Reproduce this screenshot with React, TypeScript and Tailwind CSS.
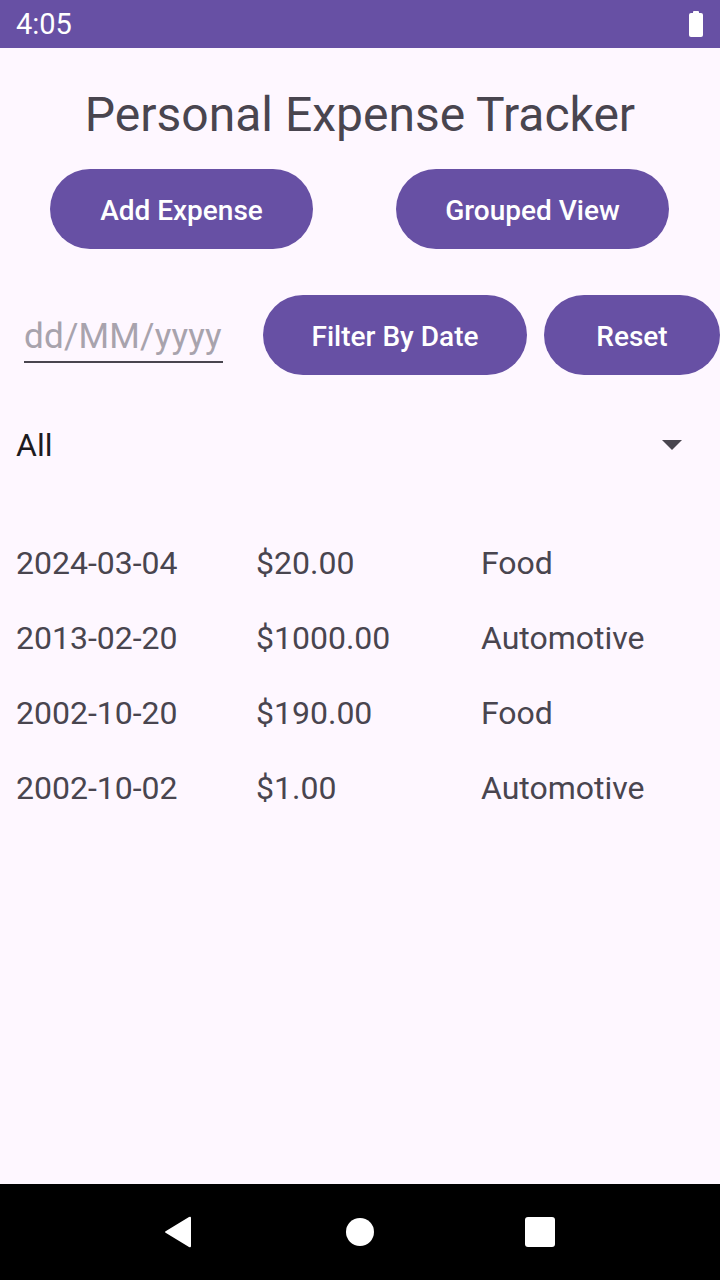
const expenses = [
  { date: "2024-03-04", amount: "$20.00", category: "Food" },
  { date: "2013-02-20", amount: "$1000.00", category: "Automotive" },
  { date: "2002-10-20", amount: "$190.00", category: "Food" },
  { date: "2002-10-02", amount: "$1.00", category: "Automotive" },
];

const PillButton = ({ label, className }: { label: string; className?: string }) => (
  <button
    className={
      "h-[80px] shrink-0 rounded-full bg-[#6750A4] pt-[3px] text-[28px] font-medium text-white " +
      (className ?? "")
    }
  >
    {label}
  </button>
);

const App = () => {
  return (
    <div className="w-[720px] h-[1280px] flex flex-col overflow-hidden bg-[#FEF7FF] font-['Roboto',sans-serif]">
      {/* status bar */}
      <div className="h-[48px] shrink-0 flex items-center justify-between bg-[#6750A4] pl-4 pr-[16px]">
        <span className="text-[29px] leading-none text-white">4:05</span>
        <svg width="16" height="26" viewBox="0 0 16 26">
          <rect x="5" y="0" width="6" height="3" rx="1" fill="#fff" />
          <rect x="1" y="2" width="14" height="24" rx="2" fill="#fff" />
        </svg>
      </div>

      <div className="flex-1 flex flex-col">
        <h1 className="mt-[39px] h-[56px] text-center text-[48px] leading-[56px] font-normal text-[#49454F]">
          Personal Expense Tracker
        </h1>

        <div className="mt-[26px] flex pl-[50px] gap-[83px]">
          <PillButton label="Add Expense" className="w-[263px]" />
          <PillButton label="Grouped View" className="w-[273px]" />
        </div>

        <div className="mt-[46px] flex items-start">
          <div className="ml-6 w-[200px] h-[68px] pt-[16px] flex items-center border-b-2 border-[#49454F] overflow-hidden">
            <span className="text-[35px] leading-none tracking-[0.2px] text-[#A8A3AD] whitespace-nowrap">dd/MM/yyyy</span>
          </div>
          <PillButton label="Filter By Date" className="ml-[40px] w-[264px]" />
          <PillButton label="Reset" className="ml-[17px] w-[176px]" />
        </div>

        <div className="mt-[38px] h-[64px] flex items-center justify-between pl-4 pr-[38px]">
          <span className="text-[32px] text-[#1D1B20]">All</span>
          <svg width="20" height="10" viewBox="0 0 20 10">
            <path d="M0 0 L20 0 L10 10 Z" fill="#49454F" />
          </svg>
        </div>

        <div className="mt-[48px] flex flex-col">
          {expenses.map((e) => (
            <div key={e.date} className="h-[75px] flex items-center pl-4 text-[32px] text-[#49454F]">
              <span className="w-[240px]">{e.date}</span>
              <span className="w-[225px]">{e.amount}</span>
              <span>{e.category}</span>
            </div>
          ))}
        </div>
      </div>

      {/* navigation bar */}
      <div className="h-[96px] shrink-0 bg-black flex items-center">
        <svg className="ml-[164px]" width="28" height="32" viewBox="0 0 28 32">
          <path d="M27 2 L27 30 Q27 32 25 31 L2 17 Q0 16 2 15 L25 1 Q27 0 27 2 Z" fill="#fff" />
        </svg>
        <div className="ml-[154px] w-[28px] h-[28px] rounded-full bg-white" />
        <div className="ml-[151px] w-[30px] h-[30px] rounded-[3px] bg-white" />
      </div>
    </div>
  );
};

export default App;
